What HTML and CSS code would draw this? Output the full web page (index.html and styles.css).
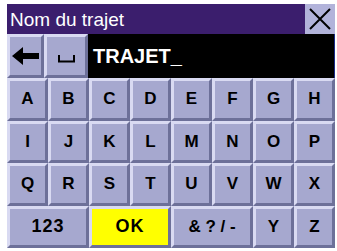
FILE: index.html
```html
<!DOCTYPE html>
<html>
<head>
<meta charset="utf-8">
<link rel="stylesheet" href="styles.css">
</head>
<body>
<div class="screen">
  <div class="titlebar">
    <div class="title">Nom du trajet</div>
    <div class="close">
      <svg width="30" height="30" viewBox="0 0 30 30"><path d="M5 5 L25 25 M25 5 L5 25" stroke="#000" stroke-width="2" fill="none"/></svg>
    </div>
  </div>
  <div class="inputrow">
    <div class="key back">
      <svg width="28" height="18" viewBox="0 0 28 18"><path d="M0 9 L11 0 L11 6 L27 6 L27 12 L11 12 L11 18 Z" fill="#000"/></svg>
    </div>
    <div class="key space">
      <svg width="17" height="8" viewBox="0 0 17 8"><path d="M1 0 L1 6.5 L16 6.5 L16 0" stroke="#000" stroke-width="2" fill="none"/></svg>
    </div>
    <div class="field">TRAJET_</div>
  </div>
  <div class="keyboard">
    <div class="key">A</div><div class="key">B</div><div class="key">C</div><div class="key">D</div>
    <div class="key">E</div><div class="key">F</div><div class="key">G</div><div class="key">H</div>
    <div class="key">I</div><div class="key">J</div><div class="key">K</div><div class="key">L</div>
    <div class="key">M</div><div class="key">N</div><div class="key">O</div><div class="key">P</div>
    <div class="key">Q</div><div class="key">R</div><div class="key">S</div><div class="key">T</div>
    <div class="key">U</div><div class="key">V</div><div class="key">W</div><div class="key">X</div>
    <div class="key wide num">123</div>
    <div class="key wide ok">OK</div>
    <div class="key wide sym">&amp; ? / -</div>
    <div class="key">Y</div><div class="key">Z</div>
  </div>
</div>
</body>
</html>
```
FILE: styles.css
```css
html, body {
  margin: 0;
  padding: 0;
  background: #ffffff;
}
body {
  padding: 4px 0 0 7px;
  font-family: "Liberation Sans", Arial, sans-serif;
}
.screen {
  width: 328px;
  height: 244px;
  display: flex;
  flex-direction: column;
}
.titlebar {
  height: 30px;
  display: flex;
  background: #3b1e6d;
}
.title {
  flex: 1;
  color: #ffffff;
  font-size: 19px;
  line-height: 31px;
  padding-left: 3px;
}
.close {
  width: 30px;
  height: 30px;
  background: #b2b3da;
}
.close svg { display: block; }
.inputrow {
  height: 44px;
  display: flex;
}
.key {
  box-sizing: border-box;
  background: #a6a8cf;
  border-style: solid;
  border-width: 3px;
  border-color: #d9daf2 #6d7099 #6d7099 #d9daf2;
  display: flex;
  align-items: center;
  justify-content: center;
  font-weight: bold;
  font-size: 17px;
  color: #000;
}
.back { width: 37px; }
.space { width: 44px; }
.space svg { margin-top: 6px; }
.field {
  flex: 1;
  background: #000000;
  color: #ffffff;
  font-weight: bold;
  font-size: 20px;
  line-height: 44px;
  padding-left: 5px;
  border-right: 1px solid #1b2a8a;
}
.keyboard {
  height: 170px;
  display: grid;
  grid-template-columns: repeat(8, 41px);
  grid-template-rows: repeat(4, 42.5px);
  border-bottom: 1px solid #1b2a8a;
  box-sizing: border-box;
}
.wide { grid-column: span 2; }
.num { letter-spacing: 1px; font-size: 18px; }
.ok { background: #ffff00; font-size: 18px; letter-spacing: 1px; }
.sym { font-size: 17px; }
```
